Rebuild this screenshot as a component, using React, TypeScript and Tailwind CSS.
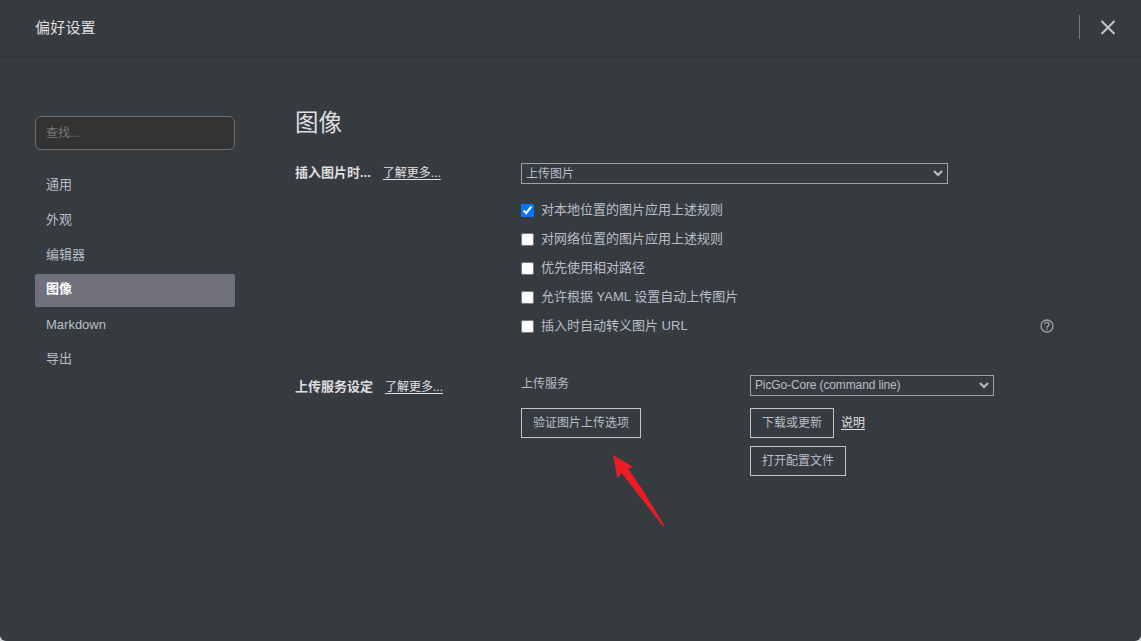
import { useState } from 'react';

const menuItems = ['通用', '外观', '编辑器', '图像', 'Markdown', '导出'];

const imageRules = [
  { label: '对本地位置的图片应用上述规则', checked: true },
  { label: '对网络位置的图片应用上述规则', checked: false },
  { label: '优先使用相对路径', checked: false },
  { label: '允许根据 YAML 设置自动上传图片', checked: false },
  { label: '插入时自动转义图片 URL', checked: false, help: true },
];

function HelpIcon() {
  return (
    <svg className="mb-0.5" width="14" height="14" viewBox="0 0 14 14" fill="none" stroke="#a0a3a6" strokeWidth="1.3">
      <circle cx="7" cy="7" r="6" />
      <path d="M4.9 5.5a2.1 2 0 1 1 3.2 1.6c-.8.5-1.1.8-1.1 1.6" />
      <path d="M7 9.5v1.4" />
    </svg>
  );
}

function LearnMore({ children }: { children: string }) {
  return (
    <a href="#" className="text-xs text-[#e2e2e2] underline underline-offset-[1.5px]">
      {children}
    </a>
  );
}

function ActionButton({ children }: { children: string }) {
  return (
    <button className="h-[30px] shrink-0 border border-[#c4c4c4] px-[11px] text-xs text-[#b8bfc6]">
      {children}
    </button>
  );
}

export default function App() {
  const [active, setActive] = useState('图像');

  return (
    <div className="h-[641px] w-[1141px] bg-[#d4d6d8]">
      <div className="flex h-full flex-col overflow-hidden rounded-b-md bg-[#363b40] font-['Liberation_Sans','Noto_Sans_CJK_SC',sans-serif] text-[13px] text-[#b8bfc6]">
        {/* Title bar */}
        <header className="flex h-[57px] shrink-0 items-center justify-between border-b border-[#303438] pr-[26px] pl-[35px] shadow-[0_1px_2px_rgba(0,0,0,0.05)]">
          <h1 className="text-[15px] tracking-[0.2px] text-[#dedede]">偏好设置</h1>
          <div className="flex items-center gap-5 pb-0.5">
            <span className="h-6 w-px bg-[#777b7f]" />
            <button aria-label="close">
              <svg width="15" height="15" viewBox="0 0 15 15" stroke="#c3c7cd" strokeWidth="2">
                <path d="M1.500 1l13 13M14.500 1L1.500 14" />
              </svg>
            </button>
          </div>
        </header>

        <div className="flex pl-[35px]">
          {/* Sidebar */}
          <aside className="w-[200px] shrink-0 pt-[59px]">
            <input
              type="text"
              placeholder="查找..."
              className="h-[34px] w-full rounded-md border border-[#6d6f71] bg-[#333333] px-2.5 text-xs placeholder:text-[#777777]"
            />
            <nav className="mt-[19.4px] flex flex-col gap-[1.8px]">
              {menuItems.map((item) => (
                <button
                  key={item}
                  onClick={() => setActive(item)}
                  className={
                    item === active
                      ? 'h-[33px] rounded-xs bg-[#70717d] px-[11px] pb-[3px] text-left font-bold text-white'
                      : 'h-[33px] rounded-xs px-[11px] pb-[1.6px] text-left'
                  }
                >
                  {item}
                </button>
              ))}
            </nav>
          </aside>

          {/* Panel */}
          <main className="ml-[60px] w-[765px] pt-12">
            <h2 className="h-[58px] text-[23.5px] leading-[36px] text-[#dedede]">图像</h2>

            <section className="flex">
              <div className="flex h-5 w-[226px] items-center gap-3">
                <h3 className="font-bold text-[#dedede]">插入图片时...</h3>
                <LearnMore>了解更多...</LearnMore>
              </div>
              <div className="flex-1">
                <div className="flex h-[21px] w-[427px] border border-[#a0a2a4] pr-px">
                  <select className="h-full w-full bg-[#363b40] text-xs">
                    <option>上传图片</option>
                  </select>
                </div>
                <div className="mt-3">
                  {imageRules.map((rule) => (
                    <div key={rule.label} className="flex h-[29px] items-center justify-between pr-[6px]">
                      <label className="flex items-center gap-[7px]">
                        <input type="checkbox" defaultChecked={rule.checked} className="size-[13px]" />
                        <span className="pb-px">{rule.label}</span>
                      </label>
                      {rule.help && <HelpIcon />}
                    </div>
                  ))}
                </div>
              </div>
            </section>

            <section className="mt-[34px] flex">
              <div className="flex h-[23px] w-[226px] items-center gap-3">
                <h3 className="font-bold text-[#dedede]">上传服务设定</h3>
                <LearnMore>了解更多...</LearnMore>
              </div>
              <div className="flex w-[229px] flex-col items-start">
                <span className="h-[33px] text-xs leading-[19px]">上传服务</span>
                <div className="relative">
                  <ActionButton>验证图片上传选项</ActionButton>
                  <svg className="absolute top-[46px] left-[91px]" width="54" height="74" viewBox="0 0 54 74" fill="#ed1c24">
                    <path d="M1 1L21.500 13L16 14.500L30 35L52.300 71.500L51 72.300L23.500 37L9.700 19L5.300 24Z" />
                  </svg>
                </div>
              </div>
              <div className="flex flex-col items-start">
                <div className="flex h-[21px] w-[244px] border border-[#a0a2a4] pr-px">
                  <select className="h-full w-full bg-[#363b40] pb-0.5 text-xs tracking-[-0.13px]">
                    <option>PicGo-Core (command line)</option>
                  </select>
                </div>
                <div className="mt-3 flex items-center gap-[7px]">
                  <ActionButton>下载或更新</ActionButton>
                  <LearnMore>说明</LearnMore>
                </div>
                <div className="mt-2">
                  <ActionButton>打开配置文件</ActionButton>
                </div>
              </div>
            </section>
          </main>
        </div>
      </div>
    </div>
  );
}
